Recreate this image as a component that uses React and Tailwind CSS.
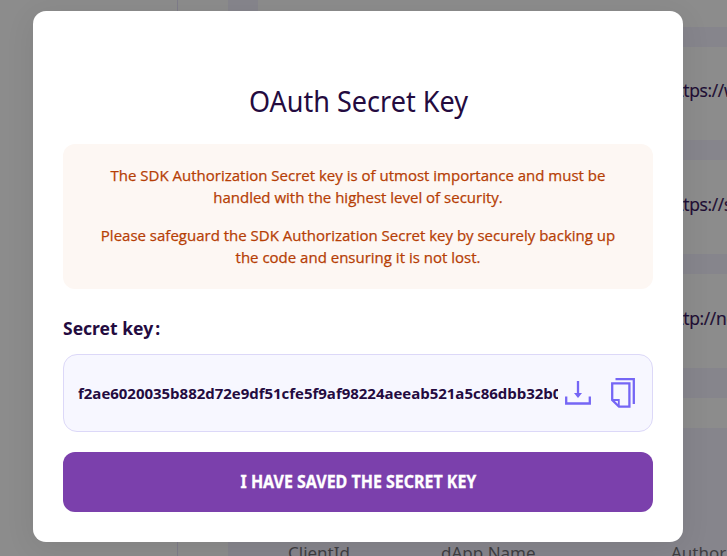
import React from "react";

const rows = [
  { url: "", height: "h-[27px]" },
  { url: "https://w", height: "h-[93px]" },
  { url: "https://s", height: "h-[94px]" },
  { url: "http://ne", height: "h-[94px]" },
];

function Page() {
  return (
    <div className="flex h-[556px] w-[727px] overflow-hidden bg-[#8c8c8c]">
      <div className="w-[178px] shrink-0 border-r border-[#7e7c89]" />
      <div className="ml-[50px] flex min-w-0 flex-1 flex-col">
        <div className="flex h-[398px] shrink-0 flex-col gap-5 bg-[#86858c] pl-[30px]">
          {rows.map((row, i) => (
            <div
              key={i}
              className={`${row.height} flex shrink-0 items-center overflow-hidden bg-[#8c8c8c] pl-[409px] font-['Open_Sans',sans-serif] text-[17.5px] tracking-[-0.35px] whitespace-nowrap text-[#1d0c33] [-webkit-text-stroke:0.2px_#1d0c33]`}
            >
              <span className="-translate-y-[3px]">{row.url}</span>
            </div>
          ))}
        </div>
        <div className="h-[30px] shrink-0" />
        <div className="flex h-32 shrink-0 bg-[#86858c] pt-[114px] pl-[60px] text-[17px] leading-[22px] whitespace-nowrap text-[#3f3e42]">
          <span className="w-[153px] shrink-0">ClientId</span>
          <span className="w-[230px] shrink-0">dApp Name</span>
          <span>Author</span>
        </div>
      </div>
    </div>
  );
}

function DownloadIcon() {
  return (
    <svg width="26" height="26" viewBox="0 0 26 26" fill="none" className="shrink-0">
      <path d="M1.2 16.5v7h23.6v-7" stroke="#7566f5" strokeWidth="2.3" />
      <path d="M13 1v14" stroke="#7566f5" strokeWidth="2.3" />
      <path d="M9 13h8l-4 5z" fill="#7566f5" />
    </svg>
  );
}

function CopyIcon() {
  return (
    <svg width="24" height="30" viewBox="0 0 24 30" fill="none" className="shrink-0">
      <path d="M4.5 1.2h18.3V26" stroke="#7566f5" strokeWidth="2.3" />
      <path d="M1.2 5.4h17.2v23.2H8L1.2 22z" stroke="#7566f5" strokeWidth="2.3" />
      <path d="M1.5 22h6.3v6.2" stroke="#7566f5" strokeWidth="1.8" />
    </svg>
  );
}

export default function App() {
  return (
    <div className="relative h-[556px] w-[727px] overflow-hidden font-['Noto_Sans','Open_Sans',sans-serif]">
      <Page />
      <div
        role="dialog"
        className="absolute top-[11px] left-[33px] flex h-[531px] w-[650px] flex-col rounded-[13px] bg-white px-[30px] pt-[67px] text-[#240b3f] shadow-[0_6px_30px_rgba(0,0,0,0.08)]"
      >
        <h1 className="flex h-[46px] shrink-0 items-center justify-center text-[29px] whitespace-nowrap">
          <span className="scale-x-[0.932]">OAuth Secret Key</span>
        </h1>
        <div className="mt-5 flex h-[145px] shrink-0 flex-col items-center gap-4 rounded-xl bg-[#fdf7f3] pt-5 text-center font-['Open_Sans',sans-serif] text-[15px] leading-[22px] whitespace-nowrap text-[#b63e05] [-webkit-text-stroke:0.25px_#b63e05]">
          <p>
            The SDK Authorization Secret key is of utmost importance and must be
            <br />
            handled with the highest level of security.
          </p>
          <p>
            Please safeguard the SDK Authorization Secret key by securely backing up
            <br />
            the code and ensuring it is not lost.
          </p>
        </div>
        <h2 className="mt-[27px] mb-px flex h-6 shrink-0 items-center gap-[2px] text-[17.5px] font-bold">
          <span>Secret key</span>
          <span>:</span>
        </h2>
        <div className="mt-[13px] flex h-[78px] shrink-0 items-center rounded-[14px] border border-[#dcd8f8] bg-[#f7f7ff] pl-[14px]">
          <div className="w-[480px] shrink-0 overflow-hidden font-['Open_Sans',sans-serif] text-[15px] font-bold tracking-[-0.02px] whitespace-nowrap">
            f2ae6020035b882d72e9df51cfe5f9af98224aeeab521a5c86dbb32b0
          </div>
          <div className="flex items-center gap-5 pl-[7px]">
            <DownloadIcon />
            <CopyIcon />
          </div>
        </div>
        <button className="mt-5 flex h-[60px] shrink-0 items-center justify-center rounded-xl bg-[#7b40ac] text-[17px] font-bold whitespace-nowrap text-white [-webkit-text-stroke:0.3px_white]">
          <span className="scale-x-[0.94]">I HAVE SAVED THE SECRET KEY</span>
        </button>
      </div>
    </div>
  );
}
